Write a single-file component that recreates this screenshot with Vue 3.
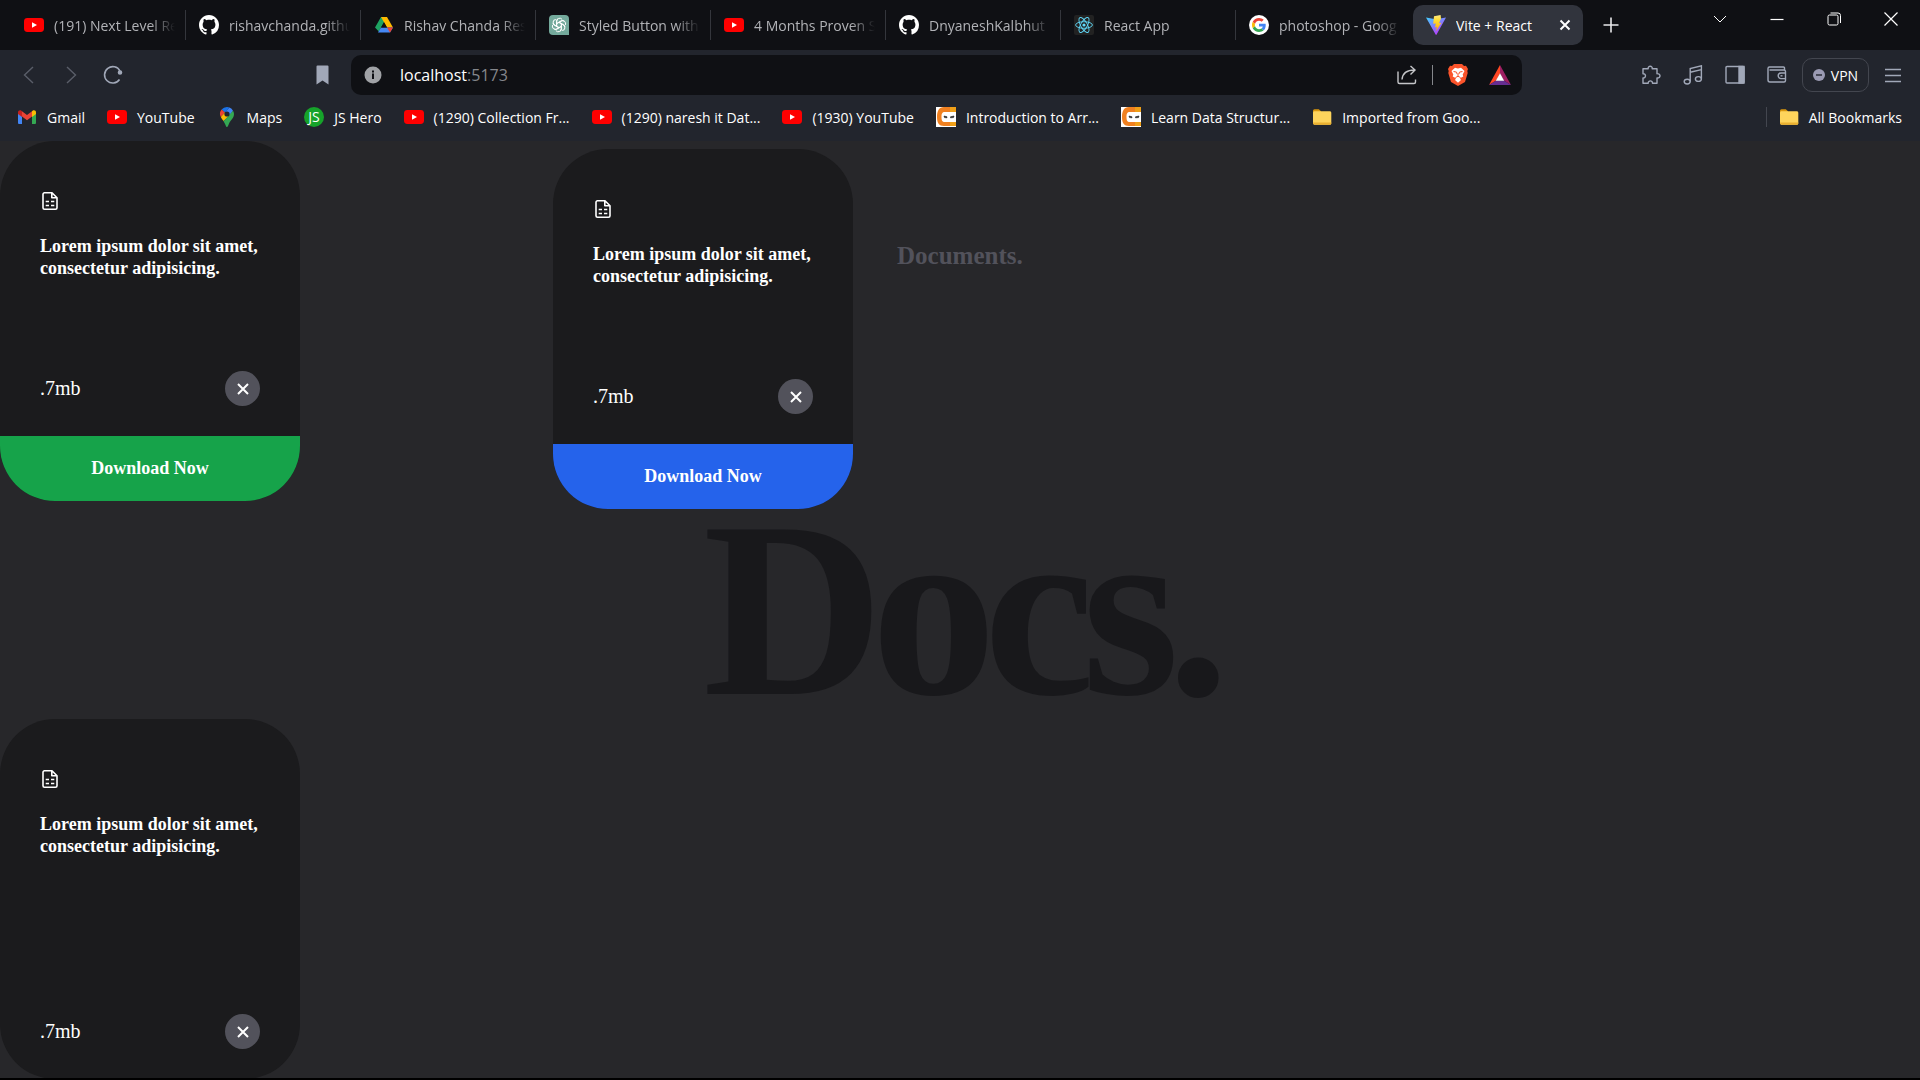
<script setup>
import { h } from 'vue'

const s = (tag, attrs, children) => h(tag, attrs, children)
const p = (d, attrs = {}) => s('path', { d, ...attrs })

const art = {
  youtube: () => [
    s('rect', { x: 0, y: 3, width: 20, height: 14, rx: 3.4, fill: '#ff0000' }),
    p('M8 7.2v5.6l5-2.8z', { fill: '#fff' }),
  ],
  github: () => [
    s('g', { transform: 'scale(1.25)' }, [
      p('M8 0C3.58 0 0 3.58 0 8c0 3.54 2.29 6.53 5.47 7.59.4.07.55-.17.55-.38 0-.19-.01-.82-.01-1.49-2.01.37-2.53-.49-2.69-.94-.09-.23-.48-.94-.82-1.13-.28-.15-.68-.52-.01-.53.63-.01 1.08.58 1.23.82.72 1.21 1.87.87 2.33.66.07-.52.28-.87.51-1.07-1.78-.2-3.64-.89-3.64-3.95 0-.87.31-1.59.82-2.15-.08-.2-.36-1.02.08-2.12 0 0 .67-.21 2.2.82.64-.18 1.32-.27 2-.27s1.36.09 2 .27c1.53-1.04 2.2-.82 2.2-.82.44 1.1.16 1.92.08 2.12.51.56.82 1.27.82 2.15 0 3.07-1.87 3.75-3.65 3.95.29.25.54.73.54 1.48 0 1.07-.01 1.93-.01 2.2 0 .21.15.46.55.38A8.01 8.01 0 0 0 16 8c0-4.42-3.58-8-8-8z', { fill: '#fff' }),
    ]),
  ],
  drive: () => [
    p('M7 2h6l-3 5.2-5.2 9.3-3.8-4z', { fill: '#1ea362' }),
    p('M7 2h6l6 10.5h-6z', { fill: '#ffba00' }),
    p('M4 17.5l3-5h12l-3 5z', { fill: '#4688f4' }),
    p('M13 12.5h6l-3 5z', { fill: '#ea4335' }),
    p('M10 7.2l3 5.3H7z', { fill: '#0f1014' }),
  ],
  gpt: () => [
    p('M4 0h12a4 4 0 0 1 4 4v16H4a4 4 0 0 1-4-4V4a4 4 0 0 1 4-4z', { fill: '#74aa9c' }),
    ...[0, 60, 120, 180, 240, 300].map((a) =>
      p('M7.6 11.4V6.2a3.1 3.1 0 0 1 5.6-1.7M7.6 8.7l4.5-2.6a3 3 0 0 1 2.7-.1', {
        fill: 'none', stroke: '#fff', 'stroke-width': 1, transform: `rotate(${a} 10 10)`,
      })),
  ],
  react: () => [
    s('rect', { width: 20, height: 20, rx: 2, fill: '#222' }),
    ...[0, 60, 120].map((a) =>
      s('ellipse', { cx: 10, cy: 10, rx: 8.4, ry: 3.3, fill: 'none', stroke: '#61dafb', 'stroke-width': 0.9, transform: `rotate(${a} 10 10)` })),
    s('circle', { cx: 10, cy: 10, r: 1.6, fill: '#61dafb' }),
  ],
  google: () => [
    s('circle', { cx: 10, cy: 10, r: 10, fill: '#fff' }),
    s('g', { transform: 'translate(3 3) scale(.292)' }, [
      p('M46.98 24.55c0-1.57-.15-3.09-.38-4.55H24v9.02h12.94c-.58 2.96-2.26 5.48-4.78 7.18l7.73 6c4.51-4.18 7.09-10.36 7.09-17.65z', { fill: '#4285f4' }),
      p('M10.53 28.59A14.5 14.5 0 0 1 9.77 24c0-1.6.27-3.14.76-4.59l-7.98-6.19A23.99 23.99 0 0 0 0 24c0 3.88.92 7.54 2.56 10.78z', { fill: '#fbbc05' }),
      p('M24 9.5c3.54 0 6.71 1.22 9.21 3.6l6.85-6.85C35.9 2.38 30.47 0 24 0 14.62 0 6.51 5.38 2.56 13.22l7.98 6.19C12.43 13.72 17.74 9.5 24 9.5z', { fill: '#ea4335' }),
      p('M24 48c6.48 0 11.93-2.13 15.89-5.81l-7.73-6c-2.15 1.45-4.92 2.3-8.16 2.3-6.26 0-11.57-4.22-13.47-9.91l-7.98 6.19C6.51 42.62 14.62 48 24 48z', { fill: '#34a853' }),
    ]),
  ],
  vite: () => [
    s('defs', {}, [
      s('linearGradient', { id: 'viteBody', x1: 0, y1: 0, x2: 0.7, y2: 1 }, [
        s('stop', { offset: 0, 'stop-color': '#41d1ff' }),
        s('stop', { offset: 1, 'stop-color': '#bd34fe' }),
      ]),
      s('linearGradient', { id: 'viteBolt', x1: 0, y1: 0, x2: 0, y2: 1 }, [
        s('stop', { offset: 0, 'stop-color': '#ffea83' }),
        s('stop', { offset: 0.3, 'stop-color': '#ffdd35' }),
        s('stop', { offset: 1, 'stop-color': '#ffa800' }),
      ]),
    ]),
    p('M20 2.6L10.6 19.5a.6.6 0 0 1-1 0L0 2.6l9.8 1.7z', { fill: 'url(#viteBody)' }),
    p('M14.6 0L8 1.3l-.8 7.5 2.6-.4-.8 4 2-.6-1.2 4.8 5.6-8.8-2.4.4 2-4.6z', { fill: 'url(#viteBolt)' }),
  ],
  gmail: () => [
    p('M1 5.5v10.2c0 .7.5 1.3 1.3 1.3H5V9z', { fill: '#4285f4' }),
    p('M19 5.5v10.2c0 .7-.5 1.3-1.3 1.3H15V9z', { fill: '#34a853' }),
    p('M5 4.2v5.2l5 3.8 5-3.8V4.2l-5 3.8z', { fill: '#ea4335' }),
    p('M1 5.2V7l4 3V4.2l-.6-.5C3 2.7 1 3.4 1 5.2z', { fill: '#c5221f' }),
    p('M19 5.2V7l-4 3V4.2l.6-.5C17 2.7 19 3.4 19 5.2z', { fill: '#fbbc04' }),
  ],
  maps: () => [
    p('M10 0a7 7 0 0 0-5.4 2.5L8 5.5 12.5.5A7 7 0 0 0 10 0z', { fill: '#1a73e8' }),
    p('M4.6 2.5A6.8 6.8 0 0 0 3.8 10L8 5.5z', { fill: '#ea4335' }),
    p('M12.5.5L8 5.5 12 9l4-5.2A7 7 0 0 0 12.5.5z', { fill: '#4285f4' }),
    p('M3.8 10c.6 1.3 1.6 2.5 2.7 4L12 9 8 5.5z', { fill: '#fbbc04' }),
    p('M16 3.8L6.5 14.2c1.8 2.3 2.3 5.8 3.5 5.8s1.5-3.5 3.5-6 3.5-4 3.5-7a7 7 0 0 0-1-3.2z', { fill: '#34a853' }),
    s('circle', { cx: 10, cy: 7, r: 2.6, fill: '#22252d' }),
  ],
  jshero: () => [
    s('circle', { cx: 10, cy: 10, r: 10, fill: '#16a32a' }),
    s('text', { x: 10, y: 15, 'text-anchor': 'middle', 'font-size': 14, 'font-family': 'Open Sans, sans-serif', fill: '#fff' }, 'JS'),
  ],
  ninja: () => [
    s('rect', { width: 20, height: 20, fill: '#fff' }),
    p('M20 0v5H9C6 5 5.5 7 5.5 10S6 15 9 15h11v4H8c-5 0-7-3-7-9S3 0 8 0z', { fill: '#f08020' }),
    p('M14 0h6v5h-6zM14 15h6v4h-6z', { fill: '#f0a018' }),
    p('M8 9l3 .8v1L8.5 10.6zM18 9l-3.5.8v1l3-.2z', { fill: '#222', stroke: '#222', 'stroke-width': 0.6 }),
  ],
  folder: () => [
    p('M1 4c0-1 .5-1.8 1.5-1.8h4.3L9 4.2v3H1z', { fill: '#d9960c' }),
    p('M2.5 4.2h15.3c.8 0 1.5.6 1.5 1.5v10.5c0 .9-.7 1.5-1.5 1.5h-15c-.9 0-1.8-.6-1.8-1.5V5.7c0-.9.6-1.5 1.5-1.5z', { fill: '#fed45c' }),
    p('M1 15.5v.8c0 .9.8 1.4 1.8 1.4h15c.8 0 1.5-.6 1.5-1.5v-.7z', { fill: '#eab030' }),
  ],
}

const Glyph = (props) =>
  h('svg', { viewBox: '0 0 20 20', width: 20, height: 20, 'aria-hidden': 'true' }, art[props.name]())
Glyph.props = ['name']

const tabs = [
  { icon: 'youtube', title: '(191) Next Level Re' },
  { icon: 'github', title: 'rishavchanda.github' },
  { icon: 'drive', title: 'Rishav Chanda Resu' },
  { icon: 'gpt', title: 'Styled Button with' },
  { icon: 'youtube', title: '4 Months Proven St' },
  { icon: 'github', title: 'DnyaneshKalbhut' },
  { icon: 'react', title: 'React App' },
  { icon: 'google', title: 'photoshop - Goog' },
]

const bookmarks = [
  { icon: 'gmail', title: 'Gmail' },
  { icon: 'youtube', title: 'YouTube' },
  { icon: 'maps', title: 'Maps' },
  { icon: 'jshero', title: 'JS Hero' },
  { icon: 'youtube', title: '(1290) Collection Fr...' },
  { icon: 'youtube', title: '(1290) naresh it Dat...' },
  { icon: 'youtube', title: '(1930) YouTube' },
  { icon: 'ninja', title: 'Introduction to Arr...' },
  { icon: 'ninja', title: 'Learn Data Structur...' },
  { icon: 'folder', title: 'Imported from Goo...' },
]

const cards = [
  { id: 'first', action: 'green' },
  { id: 'second', action: 'blue' },
  { id: 'third', action: null },
]
</script>

<template>
  <div class="browser">
    <header class="chrome">
      <div class="tabstrip">
        <nav class="tabs" aria-label="Tabs">
          <button v-for="tab in tabs" :key="tab.title" class="tab" type="button">
            <Glyph :name="tab.icon" />
            <span class="tab-title">{{ tab.title }}</span>
          </button>
          <div class="tab active">
            <Glyph name="vite" />
            <span class="tab-title">Vite + React</span>
            <button class="plain" type="button" aria-label="Close tab">
              <svg viewBox="0 0 12 12" width="12" height="12"><path d="M1.5 1.5l9 9M10.5 1.5l-9 9" stroke="#fff" stroke-width="2" /></svg>
            </button>
          </div>
          <button class="plain new-tab" type="button" aria-label="New tab">
            <svg viewBox="0 0 16 16" width="16" height="16"><path d="M8 .5v15M.5 8h15" stroke="#e8e8ea" stroke-width="1.6" /></svg>
          </button>
        </nav>
        <div class="window-controls">
          <button class="plain" type="button" aria-label="Search tabs">
            <svg viewBox="0 0 14 14" width="14" height="14" fill="none" stroke="#fff"><path d="M1 4l6 6 6-6" /></svg>
          </button>
          <button class="plain" type="button" aria-label="Minimize">
            <svg viewBox="0 0 14 14" width="14" height="14" fill="none" stroke="#fff"><path d="M.5 7.5h13" stroke-width="1.2" /></svg>
          </button>
          <button class="plain" type="button" aria-label="Restore">
            <svg viewBox="0 0 14 14" width="14" height="14" fill="none" stroke="#fff"><rect x="1" y="3" width="10" height="10" rx="1.5" /><path d="M3.500 1h7.500a2.500 2.500 0 0 1 2.500 2.500V11" /></svg>
          </button>
          <button class="plain" type="button" aria-label="Close window">
            <svg viewBox="0 0 14 14" width="14" height="14" fill="none" stroke="#fff"><path d="M.5.5l13 13M13.5.5l-13 13" stroke-width="1.2" /></svg>
          </button>
        </div>
      </div>

      <div class="toolbar">
        <div class="nav-buttons">
          <button class="plain" type="button" aria-label="Back">
            <svg viewBox="0 0 20 20" width="20" height="20" fill="none" stroke="#5a5e69" stroke-width="1.4"><path d="M14 2L5.5 10l8.5 8" /></svg>
          </button>
          <button class="plain" type="button" aria-label="Forward">
            <svg viewBox="0 0 20 20" width="20" height="20" fill="none" stroke="#5a5e69" stroke-width="1.4"><path d="M6 2l8.5 8L6 18" /></svg>
          </button>
          <button class="plain" type="button" aria-label="Reload">
            <svg viewBox="0 0 20 20" width="20" height="20" fill="none" stroke="#a1a8b8" stroke-width="1.6"><path d="M16.5 14.5A8.200 8.200 0 1 1 17 6" /><circle cx="17" cy="7.5" r="1.5" fill="#a1a8b8" /></svg>
          </button>
        </div>
        <button class="plain save" type="button" aria-label="Bookmark this page">
          <svg viewBox="0 0 20 20" width="20" height="20"><path d="M4.500.5h10a1 1 0 0 1 1 1v18l-6-4-6 4v-18a1 1 0 0 1 1-1z" fill="#a1a8b8" /></svg>
        </button>
        <div class="address">
          <svg viewBox="0 0 18 18" width="18" height="18"><circle cx="9" cy="9" r="8.5" fill="#a0a2a6" /><path d="M8 7.5h2V13H8zM8 4.500h2v2H8z" fill="#0f1014" /></svg>
          <a class="url" href="http://localhost:5173"><b>localhost</b>:5173</a>
          <button class="plain" type="button" aria-label="Share">
            <svg viewBox="0 0 20 20" width="20" height="20" fill="none" stroke="#c5c6c9" stroke-width="1.4"><path d="M1 6.500v10.500q0 1.500 1.500 1.500h14.500q1.500 0 1.500-1.500v-2.500M5 14.500C5.500 8.500 9 5 17.500 5M13.500 1l4.500 4-4.500 4.500" /></svg>
          </button>
          <span class="address-rule"></span>
          <button class="plain" type="button" aria-label="Brave Shields">
            <svg viewBox="0 0 20 22" width="20" height="22">
              <path d="M6 0h8l2 2 2-.2L20 5l-.7 2 .4 2-2.700 9-7 4-7-4L.3 9l.4-2L0 5l2-3.200L4 2z" fill="#fb542b" />
              <path d="M10 4.500l3-.8 3.500 3.300-1.800 3.500.6 2-3.300 1.800 1 1.700-3 2.800-3-2.800 1-1.700-3.300-1.800.6-2L3.500 7 7 3.700z" fill="#fff" />
              <path d="M5.500 7.500l3 .6.6 2M14.500 7.500l-3 .6-.6 2M7.500 13.500l2.500-1.200 2.500 1.200M10 12.500V9.500" stroke="#fb542b" stroke-width="1" fill="none" />
            </svg>
          </button>
          <button class="plain" type="button" aria-label="Rewards">
            <svg viewBox="0 0 22 20" width="22" height="20"><path d="M11 0L0 20l7.200-4.500L11 8.500z" fill="#ff4724" /><path d="M11 0l11 20-7.200-4.500L11 8.500z" fill="#9e1f63" /><path d="M0 20h22l-7.200-4.500H7.200z" fill="#662d91" /><path d="M11 8.200l4.200 7.500H6.800z" fill="#fff" /></svg>
          </button>
        </div>
        <div class="tools">
          <button class="plain" type="button" aria-label="Extensions">
            <svg viewBox="0 0 20 20" width="20" height="20" fill="none" stroke="#a1a8b8" stroke-width="1.4"><path d="M2 3.800h5.200c-.6-3.400 4.600-3.400 4 0H16v4.900c4-.5 4 4.700 0 4.300V18.300h-4.500c.2-3.300-4.500-3.300-4.300 0H2V13c3.300.2 3.300-4.500 0-4.300z" stroke-linejoin="round" /></svg>
          </button>
          <button class="plain" type="button" aria-label="Playlist">
            <svg viewBox="0 0 20 20" width="20" height="20" fill="none" stroke="#a1a8b8" stroke-width="1.4"><ellipse cx="4.2" cy="16.6" rx="3" ry="2.400" /><ellipse cx="15.4" cy="14" rx="3" ry="2.400" /><path d="M7.200 16.500V3.500l11.200-2.700v13M7.200 7.300l11.200-2.700" /></svg>
          </button>
          <button class="plain" type="button" aria-label="Sidebar">
            <svg viewBox="0 0 20 20" width="20" height="20" fill="none" stroke="#a1a8b8" stroke-width="1.4"><rect x="1" y="1.5" width="18" height="16.5" rx="1" /><path d="M14 1.500h5v16.500h-5z" fill="#a1a8b8" /></svg>
          </button>
          <button class="plain" type="button" aria-label="Wallet">
            <svg viewBox="0 0 20 20" width="20" height="20" fill="none" stroke="#a1a8b8" stroke-width="1.4"><path d="M17.500 5V3a1 1 0 0 0-1-1H2.500A1.500 1.500 0 0 0 1 3.500V15a2 2 0 0 0 2 2h14a1.500 1.500 0 0 0 1.500-1.500V6.500A1.500 1.500 0 0 0 17 5H2.500" /><path d="M18.500 8H14a2.800 2.800 0 0 0 0 5.600h4.500" /><path d="M13.500 10.800h2" /></svg>
          </button>
          <button class="vpn" type="button">
            <svg viewBox="0 0 12 12" width="12" height="12"><circle cx="6" cy="6" r="6" fill="#9a9ab2" /><path d="M3 6h6" stroke="#22252d" stroke-width="1.4" /></svg>
            VPN
          </button>
          <button class="plain" type="button" aria-label="Menu">
            <svg viewBox="0 0 18 18" width="18" height="18" stroke="#a1a8b8" stroke-width="1.4"><path d="M1 3.500h16M1 9.500h16M1 15.500h16" /></svg>
          </button>
        </div>
      </div>

      <nav class="bookmarks" aria-label="Bookmarks">
        <a v-for="mark in bookmarks" :key="mark.title" class="bookmark" href="#">
          <Glyph :name="mark.icon" />
          <span>{{ mark.title }}</span>
        </a>
        <a class="bookmark all" href="#"><Glyph name="folder" /><span>All Bookmarks</span></a>
      </nav>
    </header>

    <main class="page">
      <h1 class="backdrop">Docs.</h1>
      <article v-for="card in cards" :key="card.id" class="card" :class="card.id">
        <div class="card-body">
          <svg viewBox="0 0 20 20" width="20" height="20" fill="none" stroke="#fff" stroke-width="1.6">
            <path d="M4.500 1.800h7.500l5 5v10a1.500 1.500 0 0 1-1.500 1.500h-11A1.500 1.500 0 0 1 3 16.800V3.300a1.500 1.500 0 0 1 1.500-1.500zM11.800 1.800v5H17" stroke-linejoin="round" />
            <path d="M5.700 10.500H9M11 10.500h3.300M5.700 14.500H9M11 14.500h3.300" stroke-width="1.5" />
          </svg>
          <p class="summary">Lorem ipsum dolor sit amet, consectetur adipisicing.</p>
          <div class="meta">
            <span>.7mb</span>
            <button class="dismiss" type="button" aria-label="Remove">
              <svg viewBox="0 0 12 12" width="12" height="12"><path d="M1 1l10 10M11 1L1 11" stroke="#fff" stroke-width="2" /></svg>
            </button>
          </div>
        </div>
        <button v-if="card.action" class="download" :class="card.action" type="button">Download Now</button>
      </article>
      <h2 class="heading">Documents.</h2>
    </main>
  </div>
</template>

<style>
body {
  margin: 0;
  background: #000;
}
</style>

<style scoped>
.browser {
  display: flex;
  flex-direction: column;
  height: 100vh;
  box-sizing: border-box;
  border-bottom: 2px solid #000;
}
.chrome {
  flex: none;
  background: #22252d;
  font-family: "Open Sans", "Noto Sans", sans-serif;
  font-size: 14px;
  color: #fff;
}
svg {
  display: block;
  flex: none;
}
button {
  margin: 0;
  padding: 0;
  border: 0;
  background: none;
  font: inherit;
  color: inherit;
}
a {
  color: inherit;
  text-decoration: none;
}
.plain {
  display: grid;
  place-items: center;
  flex: none;
}
.tabstrip {
  display: flex;
  justify-content: space-between;
  height: 50px;
  background: #0f1014;
}
.tabs {
  display: flex;
  align-items: center;
  padding-left: 11px;
}
.tab {
  display: flex;
  align-items: center;
  gap: 10px;
  box-sizing: border-box;
  width: 175px;
  height: 30px;
  padding: 0 10px 0 13px;
  border-right: 1px solid #34363c;
  color: #b2b3b7;
  text-align: left;
}
.tab:nth-child(8) {
  border-right-color: transparent;
}
.tab-title {
  flex: 1;
  overflow: hidden;
  white-space: nowrap;
  mask-image: linear-gradient(to right, #000 80%, transparent 100%);
}
.active {
  width: 170px;
  height: 40px;
  margin-left: 2px;
  padding-right: 12px;
  border: 0;
  border-radius: 10px;
  background: #31343d;
  color: #fff;
}
.active .tab-title {
  mask-image: none;
}
.new-tab {
  width: 56px;
}
.window-controls {
  display: flex;
  height: 37px;
  padding-right: 1px;
}
.window-controls button {
  width: 57px;
}
.toolbar {
  display: flex;
  align-items: center;
  height: 50px;
}
.nav-buttons {
  display: flex;
  box-sizing: border-box;
  width: 313px;
  padding-left: 8px;
}
.nav-buttons button {
  width: 42px;
}
.save {
  margin-right: 18px;
}
.address {
  display: flex;
  align-items: center;
  gap: 18px;
  box-sizing: border-box;
  width: 61%;
  height: 40px;
  padding: 0 11px 0 13px;
  border-radius: 10px;
  background: #0f1014;
}
.address .plain:last-child {
  margin-left: 3px;
}
.url {
  flex: 1;
  font-size: 16px;
  color: #85878c;
}
.url b {
  font-weight: 400;
  color: #fff;
}
.address-rule {
  width: 1px;
  height: 20px;
  margin: 0 -3px;
  background: #85878c;
}
.tools {
  display: flex;
  align-items: center;
  gap: 22px;
  margin-left: auto;
  padding-right: 18px;
}
.vpn {
  display: flex;
  align-items: center;
  justify-content: center;
  gap: 6px;
  box-sizing: border-box;
  width: 67px;
  height: 34px;
  margin: 0 -7px;
  border: 1px solid #43464f;
  border-radius: 10px;
}
.bookmarks {
  display: flex;
  align-items: center;
  gap: 22px;
  box-sizing: border-box;
  height: 41px;
  padding: 0 18px 7px 17px;
}
.bookmark {
  display: flex;
  align-items: center;
  gap: 10px;
  white-space: nowrap;
}
.all {
  margin-left: auto;
  padding-left: 12px;
  border-left: 1px solid #43464f;
}
.page {
  position: relative;
  display: grid;
  grid-template-columns: 553fr 344fr 1023fr;
  grid-template-rows: 578px 360px;
  align-items: start;
  flex: 1;
  min-height: 0;
  overflow: hidden;
  background: #27272a;
  font-family: "Liberation Serif", "Times New Roman", serif;
  color: #fff;
}
.backdrop {
  position: absolute;
  inset: 0;
  display: grid;
  place-items: center;
  margin: 0;
  font-size: 250px;
  line-height: 1;
  letter-spacing: -0.05em;
  color: #18181b;
}
.card {
  position: relative;
  display: flex;
  flex-direction: column;
  width: 300px;
  height: 360px;
  border-radius: 55px;
  overflow: hidden;
  background: #1b1b1d;
}
.second {
  margin-top: 8px;
}
.third {
  grid-row: 2;
}
.card-body {
  display: flex;
  flex-direction: column;
  flex: 1;
  padding: 50px 40px 30px;
}
.summary {
  margin: 24px 0 0;
  font-size: 18px;
  font-weight: 700;
  line-height: 22px;
}
.meta {
  display: flex;
  align-items: center;
  justify-content: space-between;
  margin-top: auto;
  font-size: 20px;
}
.dismiss {
  display: grid;
  place-items: center;
  width: 35px;
  height: 35px;
  border-radius: 50%;
  background: #52525b;
}
.download {
  height: 65px;
  font-size: 18px;
  font-weight: 700;
}
.green {
  background: #16a34a;
}
.blue {
  background: #2563eb;
}
.heading {
  position: relative;
  grid-column: 3;
  grid-row: 1;
  margin: 100px 0 0;
  font-size: 25px;
  line-height: 30px;
  color: #52525b;
}
</style>
